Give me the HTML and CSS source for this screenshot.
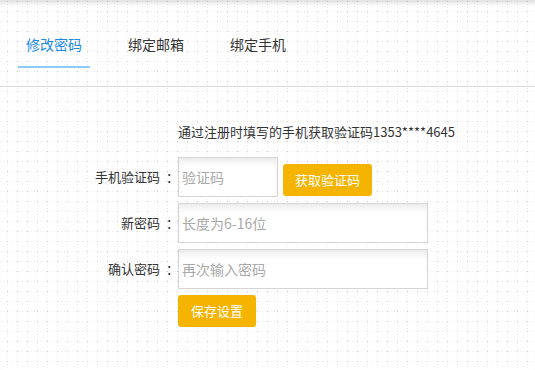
FILE: index.html
```html
<!DOCTYPE html>
<html lang="zh-CN">
<head>
<meta charset="utf-8">
<title>修改密码</title>
<link rel="stylesheet" href="styles.css">
</head>
<body>
<div class="page">
  <nav class="tabs">
    <a class="tab active">修改密码</a>
    <a class="tab">绑定邮箱</a>
    <a class="tab">绑定手机</a>
  </nav>
  <form class="form">
    <p class="notice">通过注册时填写的手机获取验证码1353****4645</p>
    <div class="row row-code">
      <label class="label">手机验证码<span class="colon">：</span></label>
      <input class="input input-short" type="text" placeholder="验证码">
      <button type="button" class="btn btn-code">获取验证码</button>
    </div>
    <div class="row">
      <label class="label">新密码<span class="colon">：</span></label>
      <input class="input input-long" type="password" placeholder="长度为6-16位">
    </div>
    <div class="row">
      <label class="label">确认密码<span class="colon">：</span></label>
      <input class="input input-long" type="password" placeholder="再次输入密码">
    </div>
    <div class="row row-submit">
      <span class="label"></span>
      <button type="button" class="btn btn-save">保存设置</button>
    </div>
  </form>
</div>
</body>
</html>
```

FILE: styles.css
```css
html, body {
  margin: 0;
  padding: 0;
}

body {
  width: 535px;
  height: 370px;
  overflow: hidden;
  font-family: "Noto Sans CJK SC", "Noto Sans", sans-serif;
  color: #333;
  background-color: #fff;
  background-image:
    conic-gradient(from 270deg at 1px 1px, #d2d2d2 25%, transparent 0),
    conic-gradient(from 270deg at 1px 1px, #efefef 25%, transparent 0),
    conic-gradient(from 270deg at 1px 1px, #efefef 25%, transparent 0);
  background-size: 10px 10px, 3px 10px, 10px 3px;
  background-position: 7px 1px, 7px 1px, 7px 1px;
}

.page {
  min-height: 370px;
  box-shadow: inset 0 6px 5px -3px rgba(0, 0, 0, 0.13);
}

.tabs {
  display: flex;
  gap: 30px;
  height: 87px;
  box-sizing: border-box;
  padding: 33px 0 0 18px;
  border-bottom: 1px solid #dcdcdc;
}

.tab {
  width: 72px;
  height: 35px;
  box-sizing: border-box;
  text-align: center;
  font-size: 14px;
  line-height: 22px;
  color: #333;
  cursor: pointer;
}

.tab.active {
  color: #1b8ae4;
  border-bottom: 2px solid #8ecbfa;
}

.form {
  margin: 0;
  padding-top: 35px;
}

.notice {
  margin: 0 0 15px 178px;
  font-size: 13px;
  line-height: 20px;
  color: #333;
}

.row {
  display: flex;
  align-items: center;
  gap: 5px;
  margin-bottom: 6px;
}

.row-code {
  align-items: flex-end;
}

.row-code .label {
  align-self: center;
}

.label {
  width: 173px;
  flex: none;
  text-align: right;
  font-size: 13px;
  line-height: 20px;
  color: #333;
}

.colon {
  display: inline-block;
  padding-left: 6px;
  margin-right: -6px;
}

.input {
  height: 40px;
  box-sizing: border-box;
  margin: 0;
  padding: 0 3px;
  border: 1px solid #d5d5d5;
  background: #fff;
  box-shadow: inset 0 7px 8px -4px rgba(0, 0, 0, 0.10);
  font-family: "Noto Sans CJK SC", "Noto Sans", sans-serif;
  font-size: 14px;
  color: #333;
  outline: none;
}

.input::placeholder {
  color: #a9a9a9;
}

.input-short {
  width: 100px;
}

.input-long {
  width: 250px;
}

.btn {
  height: 32px;
  box-sizing: border-box;
  padding: 0;
  border: none;
  border-radius: 3px;
  background: #f5b400;
  color: #fff;
  font-family: "Noto Sans CJK SC", "Noto Sans", sans-serif;
  font-size: 13px;
  line-height: 32px;
  text-align: center;
  cursor: pointer;
}

.btn-code {
  width: 89px;
  margin-bottom: 1px;
}

.btn-save {
  width: 78px;
}
```
